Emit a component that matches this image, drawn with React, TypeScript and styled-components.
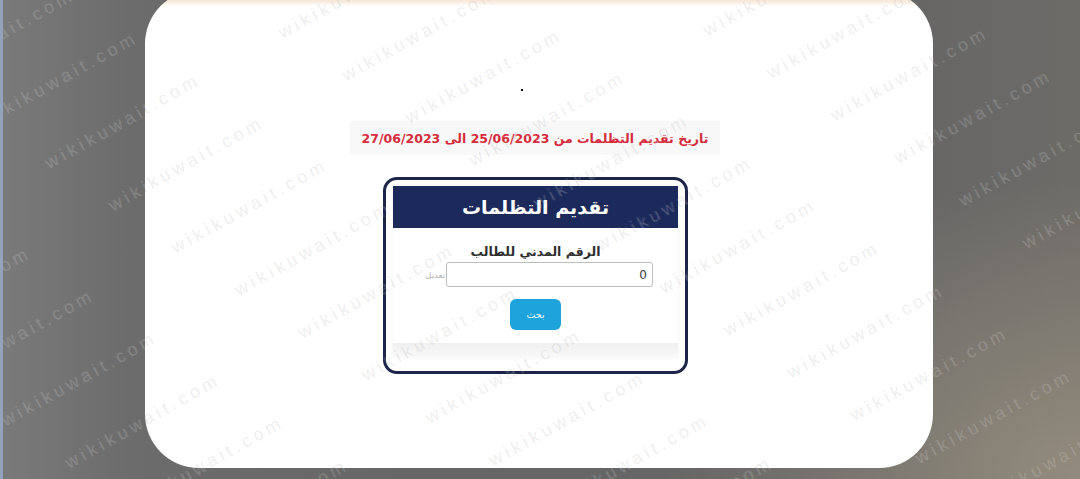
import React from "react";
import styled, { createGlobalStyle } from "styled-components";

const GlobalStyle = createGlobalStyle`
  html, body {
    margin: 0;
    padding: 0;
    width: 1080px;
    height: 479px;
    overflow: hidden;
  }
  body {
    font-family: "DejaVu Sans", "Liberation Sans", sans-serif;
    background:
      radial-gradient(ellipse 420px 300px at 100% 100%, rgba(160, 150, 132, 0.75), rgba(160, 150, 132, 0) 100%),
      linear-gradient(90deg, #7a7a7a 0%, #6c6c6c 12%, #666666 40%, #656565 80%, #6d6b68 100%);
  }
`;

const Page = styled.div`
  position: relative;
  height: 479px;
  display: flex;
  padding-left: 145px;
  box-sizing: border-box;
  border-left: 3px solid #93a3bb;
`;

const Card = styled.div`
  width: 788px;
  height: 478px;
  margin-top: -10px;
  margin-left: -3px;
  border-radius: 54px;
  background: linear-gradient(180deg, #f3dcc0 0px, #f7e9da 11px, #ffffff 16px);
  display: flex;
  flex-direction: column;
  align-items: center;
  padding-top: 99px;
  box-sizing: border-box;
`;

const Dot = styled.span`
  width: 2px;
  height: 2px;
  background: #111;
  margin-right: 34px;
`;

const DateBand = styled.div`
  margin-top: 30px;
  margin-right: 8px;
  height: 34px;
  padding: 0 12px;
  display: flex;
  align-items: center;
  background: #f8f8f8;
  color: #d62b3c;
  font-weight: 700;
  font-size: 12.5px;
  direction: rtl;
  white-space: nowrap;
`;

const Frame = styled.div`
  margin-top: 22px;
  margin-right: 7px;
  width: 305px;
  box-sizing: border-box;
  border: 3px solid #1c2548;
  border-radius: 14px;
  padding: 6px 7px 14px;
`;

const Panel = styled.div`
  background: #fff;
  box-shadow: 0 0 4px rgba(0, 0, 0, 0.06);
  display: flex;
  flex-direction: column;
  align-items: center;
`;

const Header = styled.div`
  align-self: stretch;
  height: 42px;
  background: #1b2a5b;
  color: #fff;
  display: flex;
  align-items: center;
  justify-content: center;
  font-size: 19px;
  font-weight: 700;
  direction: rtl;
`;

const Label = styled.div`
  margin-top: 15px;
  height: 18px;
  line-height: 18px;
  font-size: 12.5px;
  font-weight: 700;
  color: #2e2e2e;
  direction: rtl;
`;

const InputRow = styled.div`
  margin-top: 1px;
  display: flex;
  align-items: center;
  gap: 1px;
`;

const SideNote = styled.span`
  width: 27px;
  font-size: 8.5px;
  color: #b0b0b0;
  text-align: right;
  direction: rtl;
`;

const Field = styled.div`
  width: 207px;
  height: 25px;
  box-sizing: border-box;
  border: 1px solid #bdbdbd;
  border-radius: 3px;
  display: flex;
  align-items: center;
  justify-content: flex-end;
  padding: 0 5px;
  font-size: 12px;
  color: #3a3a3a;
`;

const SearchButton = styled.button`
  margin-top: 12px;
  width: 51px;
  height: 31px;
  border: none;
  border-radius: 6px;
  background: #1ea3dd;
  color: #fff;
  font-family: inherit;
  font-size: 9.5px;
  direction: rtl;
  padding: 0;
`;

const Footer = styled.div`
  align-self: stretch;
  margin-top: 13px;
  height: 14px;
  background: linear-gradient(180deg, #efefef, #f9f9f9);
`;

const WatermarkLayer = styled.div`
  position: absolute;
  inset: 0;
  overflow: hidden;
  pointer-events: none;
  z-index: 5;
`;

const WatermarkField = styled.div`
  position: absolute;
  left: 45px;
  top: 169px;
  transform: rotate(-29deg);
  transform-origin: 0 0;
`;

const WatermarkGrid = styled.div`
  margin-top: -356px;
  margin-left: -1072px;
  display: flex;
  flex-direction: column;
`;

const WatermarkRow = styled.div<{ $shift: number }>`
  height: 68px;
  display: flex;
  white-space: nowrap;
  transform: translateX(${(p) => p.$shift}px);
`;

const Mark = styled.span`
  flex: 0 0 268px;
  font-family: "Liberation Sans", Arial, sans-serif;
  font-size: 18px;
  letter-spacing: 4px;
  line-height: 20px;
  color: rgba(150, 150, 150, 0.17);
  text-shadow: 1px 1px 0 rgba(255, 255, 255, 0.16);
`;

const rows = Array.from({ length: 20 }, (_, i) => i - 5);
const marks = Array.from({ length: 12 }, (_, i) => i);

export default function App() {
  return (
    <>
      <GlobalStyle />
      <Page>
        <Card>
          <Dot />
          <DateBand>تاريخ تقديم التظلمات من 25/06/2023 الى 27/06/2023</DateBand>
          <Frame>
            <Panel>
              <Header>تقديم التظلمات</Header>
              <Label>الرقم المدني للطالب</Label>
              <InputRow>
                <SideNote>تعديل</SideNote>
                <Field>0</Field>
              </InputRow>
              <SearchButton>بحث</SearchButton>
              <Footer />
            </Panel>
          </Frame>
        </Card>
        <WatermarkLayer>
          <WatermarkField>
            <WatermarkGrid>
              {rows.map((r) => (
                <WatermarkRow key={r} $shift={r * 35}>
                  {marks.map((m) => (
                    <Mark key={m}>wikikuwait.com</Mark>
                  ))}
                </WatermarkRow>
              ))}
            </WatermarkGrid>
          </WatermarkField>
        </WatermarkLayer>
      </Page>
    </>
  );
}
